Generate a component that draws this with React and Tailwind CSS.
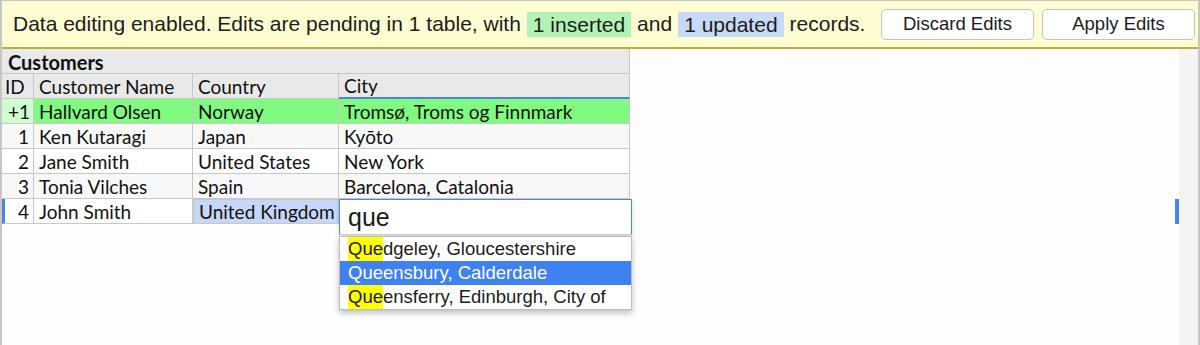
import React from 'react';

const rows = [
    { id: '1', name: 'Ken Kutaragi', country: 'Japan', city: 'Kyōto' },
    { id: '2', name: 'Jane Smith', country: 'United States', city: 'New York' },
    { id: '3', name: 'Tonia Vilches', country: 'Spain', city: 'Barcelona, Catalonia' },
];

const suggestions = [
    { hl: 'Que', rest: 'dgeley, Gloucestershire' },
    { hl: 'Que', rest: 'ensbury, Calderdale', selected: true },
    { hl: 'Que', rest: 'ensferry, Edinburgh, City of' },
];

const grid = 'grid grid-cols-[32px_159px_146px_291px]';
const cell = 'h-[25px] px-[5px] pt-[2px] flex items-center border-r border-b border-[#c8c8c8] whitespace-nowrap overflow-hidden';

function Badge({ className, children }) {
    return <span className={`inline-block h-[25px] leading-[25px] px-[6px] mx-[6px] ${className}`}>{children}</span>;
}

export default function App() {
    return (
        <div className="w-[1200px] h-[345px] flex flex-col bg-[#fdfdfd] border-x-2 border-[#c6c6c6] overflow-hidden">
            {/* edit banner */}
            <div className="h-[49px] shrink-0 flex items-center pl-[11px] pr-[3px] bg-[#fefdd2] border-t border-t-[#c6c6c6] border-b-2 border-b-[#b7b23a] text-[21px] text-[#1c1c1c] font-['Liberation_Sans',Arial,sans-serif] whitespace-nowrap">
                <span>Data editing enabled. Edits are pending in 1 table, with</span>
                <Badge className="bg-[#b4f1b4]">1 inserted</Badge>
                <span>and</span>
                <Badge className="bg-[#c9d9f8]">1 updated</Badge>
                <span>records.</span>
                <div className="ml-auto flex gap-[8px] text-[18.5px]">
                    <button className="w-[153px] h-[31px] rounded-[5px] bg-white border border-[#c2c2c2]">Discard Edits</button>
                    <button className="w-[153px] h-[31px] rounded-[5px] bg-white border border-[#c2c2c2]">Apply Edits</button>
                </div>
            </div>

            <div className="flex-1 flex min-h-0">
                <div className="flex-1 relative">
                    <div className="w-[628px] font-['Lato','Open_Sans',sans-serif] text-[19px] text-[#111]">
                        <div className="h-[25px] pl-[6px] pt-[2px] flex items-center font-bold text-[20px] bg-[#e9e9e9] border-r border-b border-[#c8c8c8]">Customers</div>
                        <div className={`${grid} bg-[#e9e9e9]`}>
                            <div className={`${cell} !px-[3px]`}>ID</div>
                            <div className={cell}>Customer Name</div>
                            <div className={cell}>Country</div>
                            <div className={`${cell} border-b-2 border-b-[#4a86e8]`}>City</div>
                        </div>
                        <div className={grid}>
                            <div className={`${cell} justify-end !pr-[3px] bg-[#cffdcf]`}>+1</div>
                            <div className={`${cell} bg-[#80fb80]`}>Hallvard Olsen</div>
                            <div className={`${cell} bg-[#80fb80]`}>Norway</div>
                            <div className={`${cell} bg-[#80fb80]`}>Tromsø, Troms og Finnmark</div>
                        </div>
                        {rows.map((r, i) => (
                            <div key={r.id} className={`${grid} ${i % 2 === 0 ? 'bg-[#f8f8f8]' : 'bg-white'}`}>
                                <div className={`${cell} justify-end !pr-[4px]`}>{r.id}</div>
                                <div className={cell}>{r.name}</div>
                                <div className={cell}>{r.country}</div>
                                <div className={cell}>{r.city}</div>
                            </div>
                        ))}
                        <div className={`${grid} bg-white`}>
                            <div className={`${cell} justify-end !pr-[4px] border-l-[3px] border-l-[#4a86e8]`}>4</div>
                            <div className={cell}>John Smith</div>
                            <div className={`${cell} bg-[#c6d6f8] border border-[#a9bde6]`}>United Kingdom</div>
                            <div className={cell}></div>
                        </div>
                    </div>

                    {/* inline city editor with suggestions */}
                    <div className="absolute left-[337px] top-[150px] w-[293px] font-['Liberation_Sans',Arial,sans-serif] text-[#1c1c1c]">
                        <div className="h-[36px] flex items-end pb-[4px] pl-[8px] bg-white border border-[#4a86e8] border-b-[#d0d0d0] text-[25px] leading-none shadow-[0_2px_4px_rgba(0,0,0,0.15)]">que</div>
                        <div className="mt-[1px] bg-white border border-[#bdbdbd] shadow-[0_3px_6px_rgba(0,0,0,0.25)] text-[18.5px] whitespace-nowrap">
                            {suggestions.map((s, i) => (
                                <div
                                    key={i}
                                    className={`h-[24px] flex items-center pl-[8px] ${s.selected ? 'bg-[#3f81f1] text-white' : ''}`}
                                >
                                    <span className={s.selected ? '' : 'bg-[#ffff00] leading-[24px]'}>{s.hl}</span>
                                    <span>{s.rest}</span>
                                </div>
                            ))}
                        </div>
                    </div>

                    {/* scroll position marker */}
                    <div className="absolute right-0 top-[150px] w-[4px] h-[25px] bg-[#4285f4]"></div>
                </div>
                <div className="w-[19px] bg-[#f4f4f4]"></div>
            </div>
        </div>
    );
}
